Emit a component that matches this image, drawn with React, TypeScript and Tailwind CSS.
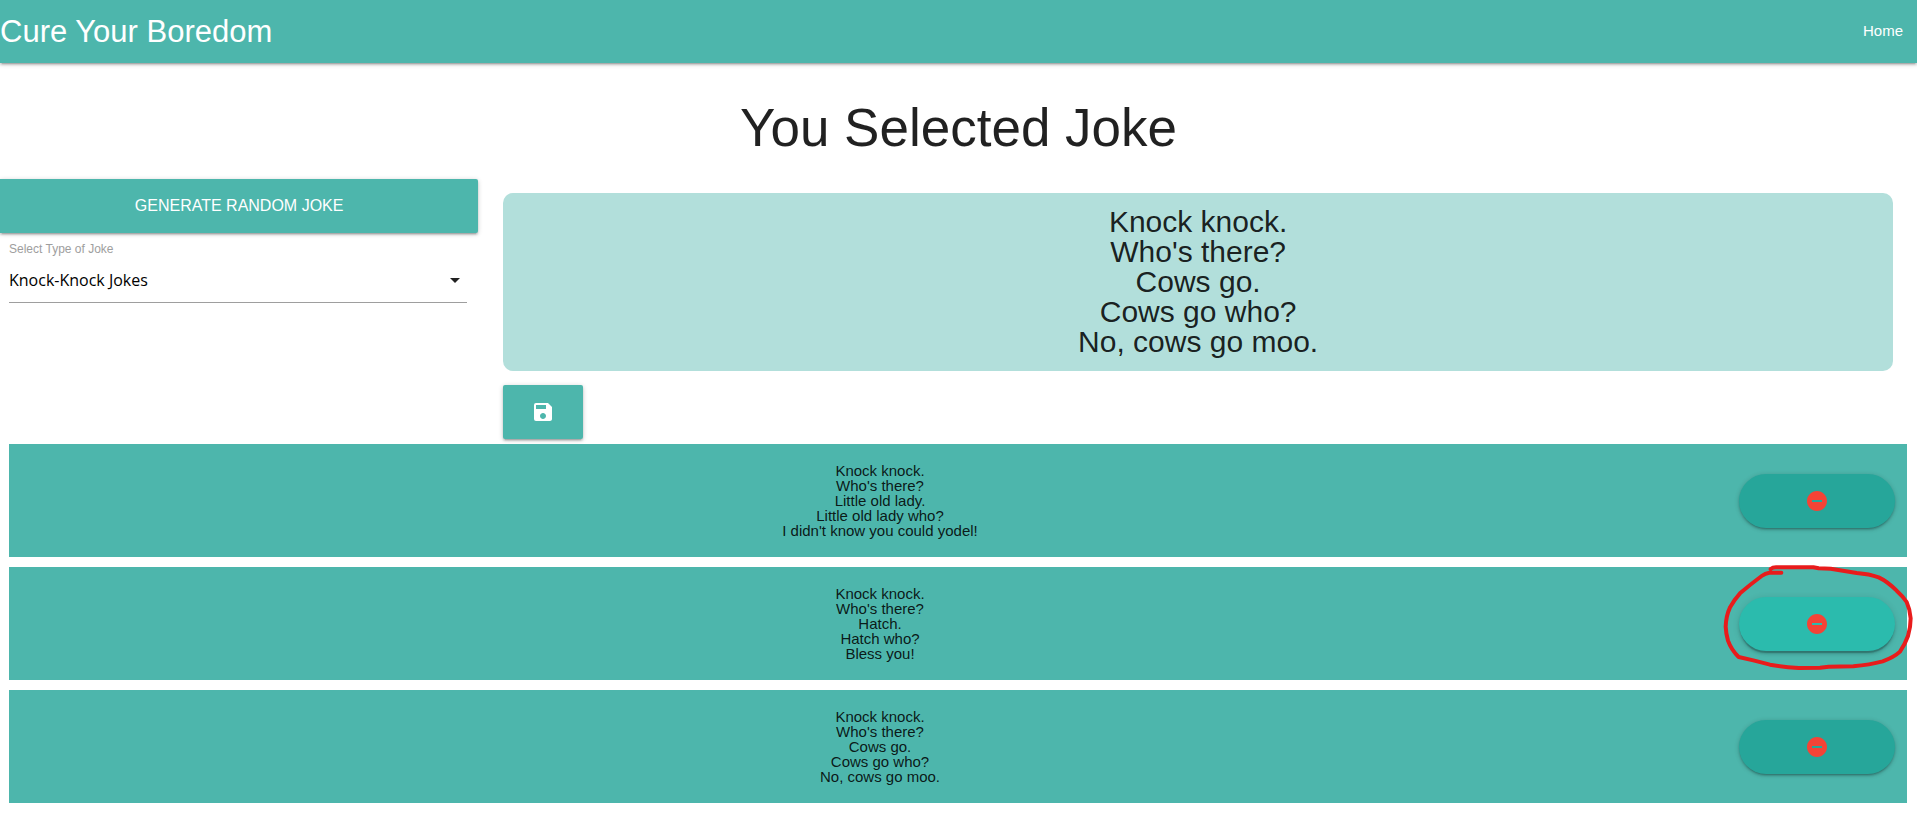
import { useState } from 'react';
import { MdArrowDropDown, MdRemoveCircle, MdSave } from 'react-icons/md';

type Joke = { id: number; lines: string[]; active?: boolean };

const currentJoke = ["Knock knock.", "Who's there?", 'Cows go.', 'Cows go who?', 'No, cows go moo.'];

const savedJokes: Joke[] = [
  {
    id: 1,
    lines: ['Knock knock.', "Who's there?", 'Little old lady.', 'Little old lady who?', "I didn't know you could yodel!"],
  },
  { id: 2, lines: ['Knock knock.', "Who's there?", 'Hatch.', 'Hatch who?', 'Bless you!'], active: true },
  { id: 3, lines: currentJoke },
];

const RAISED = 'shadow-[0_2px_2px_0_rgba(0,0,0,0.14),0_3px_1px_-2px_rgba(0,0,0,0.12),0_1px_5px_0_rgba(0,0,0,0.2)]';
const LIFTED = 'shadow-[0_3px_3px_0_rgba(0,0,0,0.14),0_1px_7px_0_rgba(0,0,0,0.12),0_3px_1px_-1px_rgba(0,0,0,0.2)]';

function JokeLines({ lines }: { lines: string[] }) {
  return (
    <>
      {lines.map((line) => (
        <span key={line} className="block">
          {line}
        </span>
      ))}
    </>
  );
}

function HandDrawnRing() {
  return (
    <svg
      className="pointer-events-none absolute -top-[35px] -left-[19px] h-[110px] w-[196px]"
      viewBox="60 36 588 330"
      fill="none"
      stroke="#e81c1c"
      strokeWidth="12"
      strokeLinecap="round"
      strokeLinejoin="round"
      aria-hidden="true"
    >
      <path d="M244 68 L208 68 Q196 70 185 78 Q150 104 120 130 Q102 150 90 172 Q78 198 77 230 Q78 252 84 272 Q94 300 116 321 L160 331 L210 344 Q250 351 296 354 L360 353 L386 350 L460 349 Q510 344 548 334 Q582 322 600 305 Q614 285 624 258 Q632 232 632 205 Q630 178 620 156 Q608 138 590 122 Q562 94 536 82 Q508 72 470 69 L392 56 L356 55 L340 52 L228 52 Q218 52 212 57" />
    </svg>
  );
}

function SavedJoke({ joke }: { joke: Joke }) {
  return (
    <li className="flex items-center bg-[#4db6ac] py-[19px] pr-3 pl-3">
      <p className="flex-1 text-center text-[15px] leading-[15px] text-black/87">
        <JokeLines lines={joke.lines} />
      </p>
      <div className="relative">
        <button
          type="button"
          aria-label="Remove joke"
          className={`flex h-[54px] w-[156px] items-center justify-center rounded-full text-[#f44336] ${
            joke.active ? `bg-[#2bbbad] ${LIFTED}` : `bg-[#26a69a] ${RAISED}`
          }`}
        >
          <MdRemoveCircle className="size-6" />
        </button>
        {joke.active && <HandDrawnRing />}
      </div>
    </li>
  );
}

export default function App() {
  const [type, setType] = useState('knock');

  return (
    <div className="min-h-screen overflow-x-hidden bg-white font-['Liberation_Sans',Arial,sans-serif] text-black/87">
      <nav className={`flex h-[63px] items-center justify-between bg-[#4db6ac] text-white ${RAISED}`}>
        <a href="#" className="text-[31px] leading-[62px]">
          Cure Your Boredom
        </a>
        <a href="#" className="px-3.5 pb-0.5 text-[15px] leading-[60px]">
          Home
        </a>
      </nav>

      <main>
        <h1 className="pt-[35px] pb-[21px] text-center text-[53px] leading-[60px]">You Selected Joke</h1>

        <div className="flex">
          <section className="w-1/4">
            <button
              type="button"
              className={`h-[54px] w-full max-w-[calc(100%-1px)] rounded-r-xs bg-[#4db6ac] text-center text-base text-white uppercase ${RAISED}`}
            >
              Generate Random Joke
            </button>
            <div className="pr-3 pl-[9px]">
              <label htmlFor="joke-type" className="block pt-2 text-xs leading-4 text-[#9e9e9e]">
                Select Type of Joke
              </label>
              <div className="relative">
                <select
                  id="joke-type"
                  value={type}
                  onChange={(event) => setType(event.target.value)}
                  className="h-[46px] w-full appearance-none border-b border-[#9e9e9e] bg-transparent font-['Open_Sans',sans-serif] text-base text-black outline-none"
                >
                  <option value="knock">Knock-Knock Jokes</option>
                </select>
                <MdArrowDropDown className="pointer-events-none absolute top-[11px] right-0 size-6" />
              </div>
            </div>
          </section>

          <section className="flex-1 pt-3.5 pr-6 pl-6">
            <p className="rounded-[10px] bg-[#b2dfdb] py-3.5 text-center text-[30px] leading-[30px]">
              <JokeLines lines={currentJoke} />
            </p>
            <button
              type="button"
              aria-label="Save joke"
              className={`mt-3.5 flex h-[54px] w-20 items-center justify-center rounded-xs bg-[#4db6ac] text-white ${RAISED}`}
            >
              <MdSave className="size-6" />
            </button>
          </section>
        </div>

        <ul className="mt-[5px] flex flex-col gap-2.5 pr-2.5 pl-[9px]">
          {savedJokes.map((joke) => (
            <SavedJoke key={joke.id} joke={joke} />
          ))}
        </ul>
      </main>
    </div>
  );
}
